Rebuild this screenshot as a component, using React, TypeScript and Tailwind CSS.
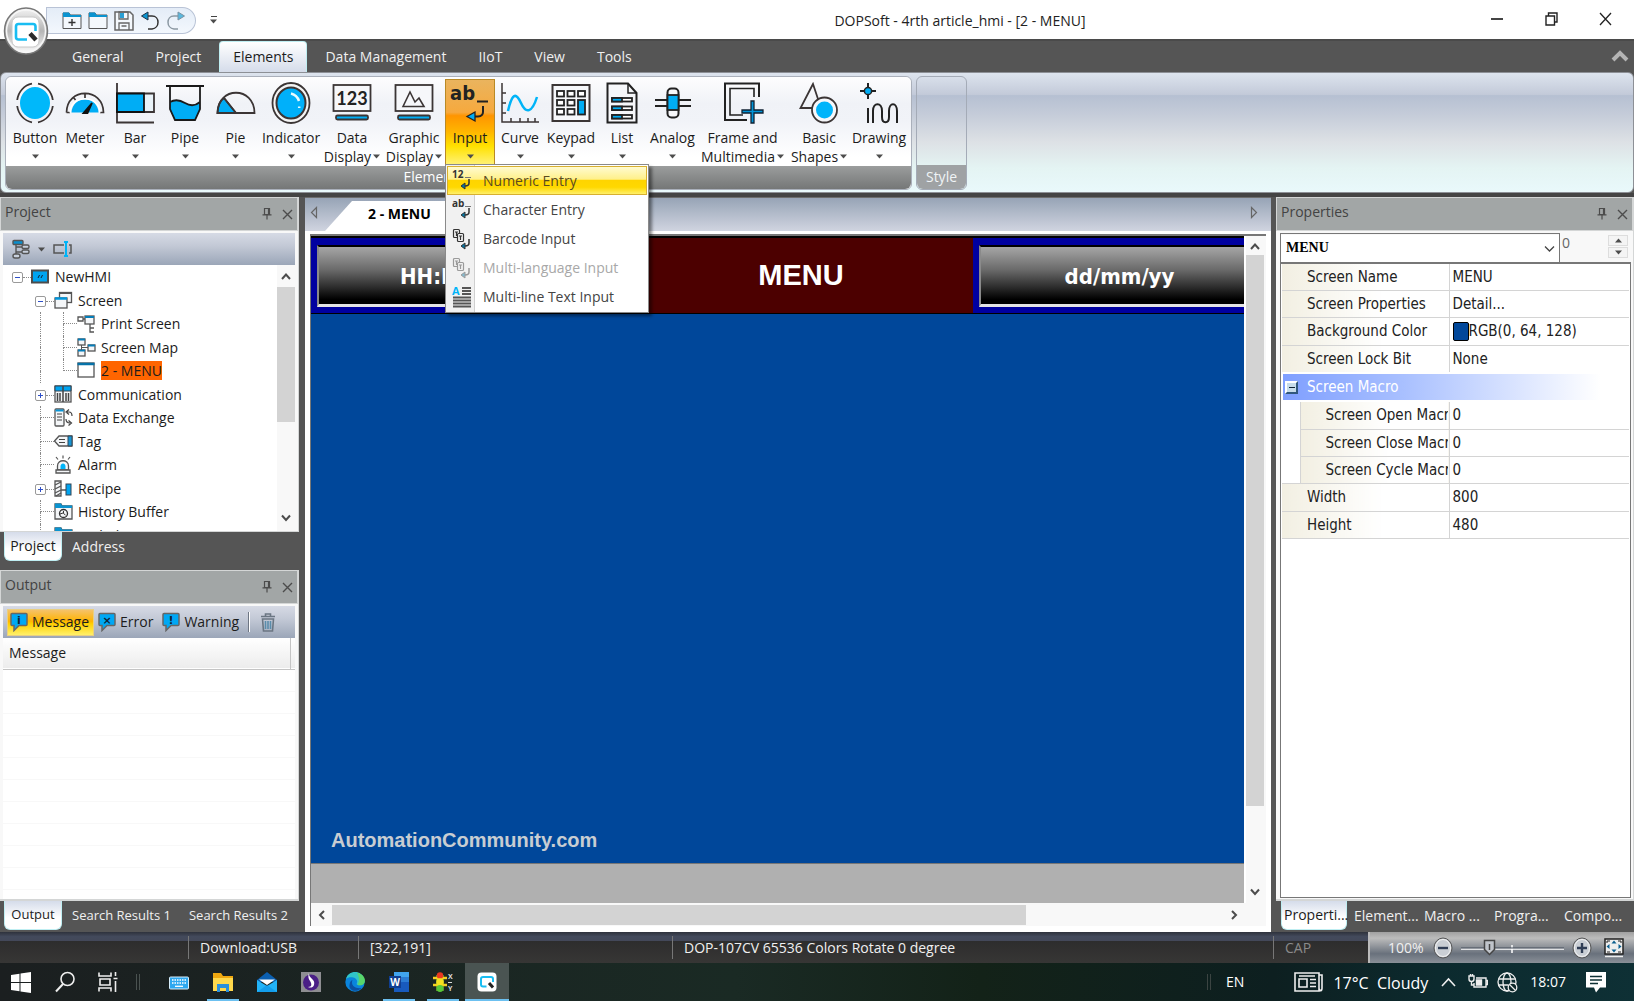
import React from "react";

const INK = "#3b3535";
const SKY = "#00adf5";

/* ---------- shared pieces ---------- */

function Caret({ className = "" }: { className?: string }) {
  return (
    <svg aria-hidden="true" width="7" height="5" viewBox="0 0 7 5" className={className}>
      <path d="M0 0.5h7L3.5 4.5z" fill="#4d4d4d" />
    </svg>
  );
}

function Pin() {
  return (
    <svg aria-hidden="true" width="10" height="14" viewBox="0 0 10 14" fill="none" stroke="#4c4c4c" strokeWidth="1.2">
      <path d="M2.5 1.5h4v6h-4zM6.5 1.5h1v6M0.5 7.8h9M5 8v4.5" />
    </svg>
  );
}

function Cross() {
  return (
    <svg aria-hidden="true" width="11" height="11" viewBox="0 0 11 11" stroke="#4c4c4c" strokeWidth="1.4">
      <path d="M1 1l9 9M10 1l-9 9" />
    </svg>
  );
}

function Chevron({ dir, size = 10 }: { dir: "up" | "down" | "left" | "right"; size?: number }) {
  const d = { up: "M1 8l4-4.5L9 8", down: "M1 2.5L5 7l4-4.5", left: "M7 1L3 5l4 4", right: "M3 1l4 4-4 4" }[dir];
  return (
    <svg aria-hidden="true" width={size} height={size} viewBox="0 0 10 10" fill="none" stroke="#4c4c4c" strokeWidth="2">
      <path d={d} />
    </svg>
  );
}

function PanelHeader({ title }: { title: string }) {
  return (
    <header className="flex h-[34px] shrink-0 items-center justify-between border border-[#d4d6d6] bg-[#a2a6a6] pb-1 pl-1 pr-1 text-sm text-[#434343]">
      <h2>{title}</h2>
      <div className="flex items-center gap-[10px] pt-1">
        <button aria-label={`Pin ${title}`}><Pin /></button>
        <button aria-label={`Close ${title}`}><Cross /></button>
      </div>
    </header>
  );
}

/* ---------- ribbon icons ---------- */

function RibbonIcon({ name }: { name: string }) {
  const art: Record<string, React.ReactNode> = {
    Button: (
      <>
        <ellipse rx="15" ry="16" fill="#00b8fa" stroke="none" />
        <path d="M-3 -19.3A18 19.4 0 0 0 -17.8 -3M-17.8 3A18 19.4 0 0 0 -3 19.3M3 19.3A18 19.4 0 0 0 17.8 3M17.8 -3A18 19.4 0 0 0 3 -19.3" fill="none" strokeWidth="1.8" />
      </>
    ),
    Meter: (
      <>
        <path d="M-13.500 9.500C-13-8 13-8 13.500 9.500z" fill={SKY} stroke="none" />
        <path d="M-18.500 9.500C-18-16 18-16 18.500 9.500h-3.500M-18.500 9.500h3.500M0-10v5M-11.500-5.500l2 2.500" fill="none" strokeWidth="1.700" />
        <path d="M-15 9.500C-14-9 14-9 15 9.500" fill="none" stroke="#fff" strokeWidth="1.500" />
        <path d="M7 0L2.500 10-1.500 10z" fill="#111" stroke="#111" />
      </>
    ),
    Bar: (
      <>
        <path d="M-18-20V19.500H19" fill="none" />
        <path d="M-18-9.500H19V9H-18z" fill="#e9f2f8" />
        <path d="M-18-9.500H9V9H-18z" fill={SKY} stroke="#111" />
      </>
    ),
    Pipe: (
      <>
        <path d="M-15-1Q-8-5 0 0T15-1V6L10 17H-10L-15 6z" fill={SKY} stroke="none" />
        <path d="M-19-17H19M-15-17V6L-10 17H10L15 6V-17M-15-1Q-8-5 0 0T15-1" fill="none" stroke="#1a1a1a" />
      </>
    ),
    Pie: (
      <>
        <path d="M-18.500 10Q-18-1-12-5L0 10z" fill={SKY} />
        <path d="M-18.500 10C-18.500-17 18.500-17 18.500 10zM-12-5L0 10" fill="none" />
      </>
    ),
    Indicator: (
      <>
        <ellipse rx="18.500" ry="20" fill="#f4f4f4" />
        <ellipse rx="14.500" ry="15.500" fill="#00b0fa" strokeWidth="2" />
        <path d="M0-9.500Q6-8 8-2M8.200 3.500v1.500" stroke="#e8fbff" strokeWidth="2.500" fill="none" />
      </>
    ),
    Data: (
      <>
        <rect x="-18.500" y="-18" width="37" height="26" fill="#f6f7fa" />
        <rect x="-16" y="12.500" width="32" height="4" rx="1.500" fill={SKY} />
        <text y="2" textAnchor="middle" fontSize="18" fontWeight="700" fontFamily="Lato, sans-serif" fill="#222" stroke="none">123</text>
      </>
    ),
    Graphic: (
      <>
        <rect x="-18.500" y="-18" width="37" height="26" fill="#f6f7fa" />
        <rect x="-16" y="12.500" width="32" height="4" rx="1.500" fill={SKY} />
        <path d="M-11 3.500L-4-11 1-1 5-5 10 3.500z" fill="none" strokeWidth="1.600" />
      </>
    ),
    Input: (
      <>
        <text x="-20" y="-3" fontSize="20" fontWeight="700" fontFamily="DejaVu Sans Condensed, DejaVu Sans, sans-serif" fill="#222" stroke="none">ab</text>
        <path d="M7-1.500H18M13 3V9Q13 13 8 13.500H4" fill="none" stroke="#222" strokeWidth="2" />
        <path d="M5 9L-3 13.500L5 18z" fill={SKY} stroke="#222" strokeWidth="1.300" />
      </>
    ),
    Curve: (
      <>
        <path d="M-18-20V19H19M-18-10h4M-18 0h4M-18 10h4M-9 19v-4M0 19v-4M8 19v-4M15 19v-4" fill="none" strokeWidth="1.500" />
        <path d="M-12 8C-8-10-4-11 1 0S12 10 17-6" fill="none" stroke="#00b4f8" strokeWidth="2.500" />
      </>
    ),
    Keypad: (
      <>
        <rect x="-18.500" y="-18" width="37" height="36" fill="#f6f7fa" strokeWidth="2" />
        {[-14, -3.5, 7].map((x) =>
          [-12, -3, 6].map((y) =>
            x === 7 && y > -12 ? null : <rect key={`${x}${y}`} x={x} y={y} width="7" height="5.500" fill="#fff" stroke="#222" strokeWidth="1.800" />
          )
        )}
        <rect x="7" y="-3" width="7" height="14.500" fill={SKY} stroke="#222" strokeWidth="1.800" />
      </>
    ),
    List: (
      <>
        <path d="M-14.500-19.500H6L14.500-10V19.500H-14.500z" fill="#f6f7fa" strokeWidth="2" stroke="#222" />
        <path d="M6-19.500V-10H14.500" fill="none" strokeWidth="1.500" stroke="#222" />
        {[-5, 3.5, 12].map((y) => (
          <g key={y} stroke="#222" strokeWidth="1.800">
            <rect x="-10" y={y} width="20" height="3.500" fill="#fff" />
            <rect x="-10" y={y} width="10" height="3.500" fill={SKY} />
          </g>
        ))}
      </>
    ),
    Analog: (
      <>
        <path d="M-18-3H18M-18 3H18" strokeWidth="2" stroke="#222" />
        <rect x="-5.500" y="-14.500" width="11" height="29" rx="4" fill="#f6f7fa" stroke="#222" strokeWidth="2" />
        <rect x="-5.500" y="-8" width="11" height="15" fill={SKY} stroke="#222" />
      </>
    ),
    Frame: (
      <>
        <path d="M16-6V-19.500H-18V17H4" fill="none" stroke="#222" strokeWidth="2" />
        <path d="M11-6V-14.500H-13V12H0" fill="none" stroke="#222" strokeWidth="1.600" />
        <path d="M8-2h3v9h9v3h-9v10h-3v-10h-9v-3h9z" fill="#0094d8" stroke="#123" strokeWidth="1.300" />
      </>
    ),
    Basic: (
      <>
        <path d="M-6-19L-18.500 5H2z" fill="none" />
        <circle cx="5.500" cy="7" r="12.500" fill="#f6f7fa" />
        <circle cx="5.500" cy="7" r="8.500" fill="#00b4fa" stroke="none" />
      </>
    ),
    Drawing: (
      <>
        <path d="M-11-20V-4M-19-12H-3" strokeWidth="2" stroke="#222" />
        <circle cx="-11" cy="-12" r="3.600" fill={SKY} stroke="#222" strokeWidth="1.500" />
        <path d="M-11 20V5M-11 5M-6 20V8C-6-1 3-1 3 8V14C3 21 10 21 10 14V8C10-1 18-1 18 8V20" fill="none" stroke="#222" strokeWidth="2" />
      </>
    ),
  };
  return (
    <svg aria-hidden="true" width="42" height="42" viewBox="-21 -21 42 42" stroke={INK} strokeWidth="1.800" className="shrink-0">
      {art[name]}
    </svg>
  );
}

const RIBBON: { id: string; lines: [string, string?]; w: string }[] = [
  { id: "Button", lines: ["Button"], w: "w-[50px]" },
  { id: "Meter", lines: ["Meter"], w: "w-[50px]" },
  { id: "Bar", lines: ["Bar"], w: "w-[50px]" },
  { id: "Pipe", lines: ["Pipe"], w: "w-[50px]" },
  { id: "Pie", lines: ["Pie"], w: "w-[51px]" },
  { id: "Indicator", lines: ["Indicator"], w: "w-[60px]" },
  { id: "Data", lines: ["Data", "Display"], w: "w-[62px]" },
  { id: "Graphic", lines: ["Graphic", "Display"], w: "w-[62px]" },
  { id: "Input", lines: ["Input"], w: "w-[50px]" },
  { id: "Curve", lines: ["Curve"], w: "w-[50px]" },
  { id: "Keypad", lines: ["Keypad"], w: "w-[52px]" },
  { id: "List", lines: ["List"], w: "w-[50px]" },
  { id: "Analog", lines: ["Analog"], w: "w-[51px]" },
  { id: "Frame", lines: ["Frame and", "Multimedia"], w: "w-[89px]" },
  { id: "Basic", lines: ["Basic", "Shapes"], w: "w-[64px]" },
  { id: "Drawing", lines: ["Drawing"], w: "w-[56px]" },
];

/* ---------- input drop-down ---------- */

function MenuArrow({ faded = false }: { faded?: boolean }) {
  return (
    <g opacity={faded ? 0.45 : 1}>
      <path d="M17 11v4q0 3-4 3" fill="none" stroke="#333" strokeWidth="1.500" />
      <path d="M13 15l-4 3 4 3z" fill="#0078a8" stroke="#333" />
    </g>
  );
}

function MenuIcon({ kind }: { kind: string }) {
  if (kind === "lines")
    return (
      <svg aria-hidden="true" width="20" height="22" viewBox="0 0 20 22">
        <path d="M10 2h9M10 5h9M10 8h9M1 11.500h18M1 14.500h18M1 17.500h18M1 20.500h18" stroke="#555" strokeWidth="1.900" />
        <text x="0" y="9" fontSize="11" fontWeight="700" fontFamily="Open Sans, sans-serif" fill="#00b4f8">A</text>
      </svg>
    );
  if (kind === "barcode" || kind === "lang")
    return (
      <svg aria-hidden="true" width="20" height="22" viewBox="0 0 20 22">
        <g opacity={kind === "lang" ? 0.45 : 1} fill="none" stroke="#333" strokeWidth="1.200">
          <rect x="1.500" y="1.500" width="6" height="8" rx="1" />
          <path d="M3 4h3M4.500 4v4" />
          <rect x="5.500" y="5.500" width="6" height="8" rx="1" fill="#f2f2f2" />
          <path d="M7 8h3M8.500 8v4" />
        </g>
        <MenuArrow faded={kind === "lang"} />
      </svg>
    );
  return (
    <svg aria-hidden="true" width="20" height="22" viewBox="0 0 20 22">
      <text x="0" y="8" fontSize="10" fontWeight="700" fontFamily="Open Sans, sans-serif" fill="#333">{kind}</text>
      <path d="M13 7.500h6" stroke="#777" />
      <g transform="translate(0 -2)"><MenuArrow /></g>
    </svg>
  );
}

const MENU = [
  { label: "Numeric Entry", kind: "12" },
  { label: "Character Entry", kind: "ab" },
  { label: "Barcode Input", kind: "barcode" },
  { label: "Multi-language Input", kind: "lang" },
  { label: "Multi-line Text Input", kind: "lines" },
];

function InputMenu() {
  return (
    <div role="menu" className="absolute left-0 top-[85px] z-20 flex w-[204px] flex-col border border-[#8a8a8a] bg-[linear-gradient(90deg,#f1f1f1_28px,#d0d0d0_28px,#d0d0d0_29px,#fff_29px)] p-px text-left shadow-[3px_3px_3px_rgba(0,0,0,0.45)]">
      {MENU.map((m, i) => (
        <button
          key={m.label}
          role="menuitem"
          disabled={m.kind === "lang"}
          className={`flex h-[29px] items-center gap-[11px] whitespace-nowrap border pl-1 text-sm disabled:text-[#a8a8a8] ${
            i === 0
              ? "border-[#d8b030] bg-[linear-gradient(180deg,#fffbd0_0%,#fff08a_45%,#ffd400_50%,#ffd800_75%,#fff06a_100%)] text-[#5a4a20]"
              : "border-transparent text-[#444]"
          }`}
        >
          <MenuIcon kind={m.kind} />
          {m.label}
        </button>
      ))}
    </div>
  );
}

function Ribbon() {
  return (
    <section className="flex h-[121px] shrink-0 items-start rounded-md border border-[#8d9096] bg-[linear-gradient(180deg,#dde4ee_0%,#c3cad9_18%,#b6c0d2_19%,#c5ccd9_35%,#dde1e5_58%,#e4f4f3_80%,#e9f9fb_100%)] px-1 pt-[3px]">
      <div className="rounded-md border border-[#aab0bb] bg-[#fdfdfe]">
        <div className="flex h-[89px] rounded-t-md bg-[linear-gradient(180deg,#fdfdfe_0%,#f0f2f7_30%,#f1f3f8_50%,#ffffff_90%)] px-1 pt-[2px]">
          {RIBBON.map((r) => {
            const active = r.id === "Input";
            return (
              <div key={r.id} className={`relative shrink-0 ${r.w}`}>
                <button
                  className={`flex h-[87px] w-full flex-col items-center whitespace-nowrap border pt-[2px] text-sm leading-[19px] text-[#1c1c1c] ${
                    active
                      ? "border-[#b98a26] bg-[linear-gradient(180deg,#eab45e_0%,#f6a93e_38%,#ff9500_42%,#ffb400_60%,#ffe100_78%,#fff27a_100%)]"
                      : "border-transparent"
                  }`}
                >
                  <RibbonIcon name={r.id} />
                  <span className="mt-1">{r.lines[0]}</span>
                  {r.lines[1] ? (
                    <span className="flex items-center gap-[2px] leading-[19px]">
                      {r.lines[1]}
                      <Caret />
                    </span>
                  ) : (
                    <Caret className="mt-[7px]" />
                  )}
                </button>
                {active && <InputMenu />}
              </div>
            );
          })}
        </div>
        <div className="h-[23px] rounded-b-md bg-[linear-gradient(180deg,#9b9d9d,#757777)] text-center text-sm leading-[22px] text-white">
          <span className="pr-[50px]">Elements</span>
        </div>
      </div>
      <div className="ml-1 flex h-[114px] w-[51px] flex-col justify-end rounded-md border border-[#a4abb7]">
        <div className="h-6 rounded-b-md bg-[#9fa2a4] text-center text-sm leading-[23px] text-[#f0f4f6]">Style</div>
      </div>
    </section>
  );
}

/* ---------- title bar and tabs ---------- */

function AppBadge() {
  return (
    <svg aria-hidden="true" width="46" height="50" viewBox="0 0 46 50">
      <defs>
        <linearGradient id="badge" x1="0" y1="0" x2="0" y2="1">
          <stop offset="0" stopColor="#f4f4f4" />
          <stop offset="0.5" stopColor="#b5b5b5" />
          <stop offset="1" stopColor="#fff" />
        </linearGradient>
      </defs>
      <ellipse cx="23" cy="25" rx="21.500" ry="23" fill="url(#badge)" stroke="#777" strokeWidth="1.500" />
      <ellipse cx="23" cy="25" rx="19.500" ry="21" fill="none" stroke="#f6f6f6" strokeWidth="1.500" />
      <rect x="9" y="11" width="27" height="30" rx="6" fill="#fff" stroke="#c8c8c8" />
      <path d="M24 33.500H15.500q-2.500 0-2.500-2.500V20.500Q13 18 15.500 18H30q2.500 0 2.500 2.500V25" fill="none" stroke="#19bdf2" strokeWidth="2.600" />
      <path d="M27 27.500L33 34" stroke="#2b2b2b" strokeWidth="4.500" />
    </svg>
  );
}

function QuickIcon({ name }: { name: string }) {
  const d: Record<string, React.ReactNode> = {
    New: (<><path d="M1 2h6l1.500 2H19v13.500H1z" fill="#f4f8fc" stroke="#555" /><path d="M1 1.500h6l1.500 2.500H19v2H1z" fill="#0a93d0" /><path d="M10 8v7M6.500 11.500h7" stroke="#333" strokeWidth="1.400" /></>),
    Open: (<><path d="M1 2h6l1.500 2H19v13.500H1z" fill="#f4f8fc" stroke="#555" /><path d="M1 1.500h6l1.500 2.500H19v2H1z" fill="#0a93d0" /></>),
    Save: (<><path d="M1 1h15l3 3v15H1z" fill="#f4f8fc" stroke="#666" strokeWidth="1.500" /><path d="M5 1h9v7H5zM5 19v-7h10v7M7.500 15h5" fill="none" stroke="#666" strokeWidth="1.300" /><path d="M6 2h4v5H6z" fill="#2a9fd4" /></>),
    Undo: (<><path d="M5 5h7c8 0 8 12 0 13H8" fill="none" stroke="#333" strokeWidth="1.500" /><path d="M8 1L1.500 5 8 9z" fill="#0a93d0" stroke="#234" /></>),
    Redo: (<><path d="M15 5H8c-8 0-8 12 0 13h4" fill="none" stroke="#8c99a3" strokeWidth="1.500" /><path d="M12 1l6.500 4L12 9z" fill="#5ab8de" stroke="#7a93a3" /></>),
  };
  return <svg aria-hidden="true" width="20" height="20" viewBox="0 0 20 20">{d[name]}</svg>;
}

function TitleBar() {
  return (
    <header className="flex h-[39px] shrink-0 bg-white">
      <div className="flex w-[450px] shrink-0 items-start gap-[14px] pl-[46px] pt-[7px]">
        <div className="flex h-[27px] items-center gap-[6px] rounded-l-[12px] rounded-r-full border border-[#b9c3d6] bg-[linear-gradient(180deg,#e4ecf7,#f3f8fd)] pl-[15px] pr-[9px]">
          {["New", "Open", "Save", "Undo", "Redo"].map((n) => (
            <button key={n} aria-label={n}><QuickIcon name={n} /></button>
          ))}
        </div>
        <button aria-label="Customize toolbar" className="mt-[9px] flex flex-col items-center gap-[2px]">
          <span className="h-px w-[6px] bg-[#444]" />
          <Caret />
        </button>
      </div>
      <h1 className="flex flex-1 items-center justify-center whitespace-nowrap pt-[2px] text-sm text-[#222]">DOPSoft - 4rth article_hmi - [2 - MENU]</h1>
      <div className="flex w-[164px] shrink-0 items-center pb-[2px] pr-[2px] text-[#222]">
        <button aria-label="Minimize" className="flex flex-1 justify-center"><span className="h-[2px] w-3 bg-[#444]" /></button>
        <button aria-label="Restore" className="flex flex-1 justify-center">
          <svg aria-hidden="true" width="13" height="14" viewBox="0 0 13 14" fill="none" stroke="#222" strokeWidth="1.400"><path d="M1 4h8.500v9H1zM3.500 4V1H12v9H9.500" /></svg>
        </button>
        <button aria-label="Close" className="flex flex-1 justify-center">
          <svg aria-hidden="true" width="13" height="14" viewBox="0 0 13 14" stroke="#222" strokeWidth="1.300"><path d="M1 1l11 12M12 1L1 13" /></svg>
        </button>
      </div>
    </header>
  );
}

function RibbonTabs() {
  return (
    <nav className="flex h-[33px] shrink-0 items-end border-t-2 border-[#4a4a4a] bg-[#555] pl-14 pr-1 text-sm">
      {["General", "Project", "Elements", "Data Management", "IIoT", "View", "Tools"].map((t) => (
        <button
          key={t}
          className={
            t === "Elements"
              ? "mx-[2px] h-[31px] rounded-t-[4px] border-x border-t border-[#bfeef2] bg-[linear-gradient(180deg,#ffffff,#d5dcea)] px-[13px] text-[#1c1c1c]"
              : "h-[31px] px-4 text-[#f0f0f0]"
          }
        >
          {t}
        </button>
      ))}
      <button aria-label="Collapse ribbon" className="ml-auto self-center pb-px">
        <svg aria-hidden="true" width="20" height="16" viewBox="0 0 20 16" fill="none" stroke="#b4b4b4" strokeWidth="4"><path d="M3 12l7-7 7 7" /></svg>
      </button>
    </nav>
  );
}

/* ---------- project tree ---------- */

function TreeIcon({ name }: { name: string }) {
  const s = { fill: "#f4f6f8", stroke: "#555", strokeWidth: 1.3 };
  const art: Record<string, React.ReactNode> = {
    hmi: (<><rect x="1" y="3.500" width="16" height="12" fill="#00a4f0" stroke="#4c4c4c" strokeWidth="2" /><path d="M7 11l1.500-3M10 11l1.500-3" stroke="#123" /></>),
    screens: (<><rect x="5.500" y="1.500" width="12" height="10" {...s} /><path d="M5 2h13" stroke="#555" strokeWidth="2" /><rect x="1" y="7" width="12" height="10" {...s} /><path d="M1 7.500h12" stroke="#0096dc" strokeWidth="2.500" /></>),
    print: (<><rect x="8" y="2" width="9" height="8" {...s} /><path d="M8 3h9" stroke="#067db8" strokeWidth="2" /><path d="M1 3h5v4H1zM6 5h2M13 10v8h4M13 14h4" fill="none" stroke="#555" strokeWidth="1.300" /></>),
    map: (<><rect x="1" y="1" width="7" height="6" {...s} /><rect x="1" y="12" width="7" height="6" {...s} /><rect x="11" y="7" width="7" height="6" {...s} /><path d="M1 1.500h7M1 12.500h7M11 7.500h7" stroke="#067db8" strokeWidth="2" /><path d="M4.500 7v5M4.500 9.500H11" stroke="#555" /></>),
    window: (<><rect x="1" y="2" width="16" height="14" {...s} fill="#fff" /><path d="M0.500 3h17" stroke="#0672a8" strokeWidth="2.500" /></>),
    comm: (<><rect x="1" y="1" width="16" height="16" {...s} /><path d="M1 1h16v5H1z" fill="#00a4f0" stroke="#345" /><path d="M9 1v16M3.500 8v8M6 8v8M12 8v8M14.500 8v8" stroke="#444" strokeWidth="1.500" /></>),
    exchange: (<><rect x="1" y="1" width="9" height="17" rx="1" {...s} /><path d="M1.500 2.500h8" stroke="#0896d8" strokeWidth="2" /><path d="M3 6h5M3 9h5M3 12h5M13 4h2q3 0 3 4M15 1.500L12 4l3 2.500M12 11q0 4 4 4M14.500 12.500L17.500 15l-3 2.500" fill="none" stroke="#444" strokeWidth="1.200" /></>),
    tag: (<><path d="M5 4h13v10H5L0.500 9z" {...s} /><path d="M14 4h4v10h-4z" fill="#1795d4" stroke="#345" /><path d="M5 7.500h6M5 10.500h6" stroke="#444" /></>),
    alarm: (<><path d="M3.500 15V11c0-7 11-7 11 0v4z" {...s} /><path d="M6.500 14v-2.500c0-4 5-4 5 0V14z" fill="#00b4f8" /><path d="M2 15h14v3H2z" {...s} /><path d="M9 0.500v3M2 2l2 2.500M16 2l-2 2.500" stroke="#555" strokeWidth="1.200" /></>),
    recipe: (<><path d="M1 2h6v15H1z" {...s} /><path d="M1 6l6-3M1 10l6-3M1 14l6-3M2 17l5-3M7 11h5" stroke="#555" strokeWidth="1.300" /><rect x="12" y="5" width="5" height="11" fill="#00a4f0" stroke="#345" /></>),
    history: (<><path d="M1 2h6l1 2h10v13H1z" {...s} /><path d="M1 1.500h6l1 2h10v2.500H1z" fill="#0a93d0" /><circle cx="9.500" cy="11.500" r="4" {...s} stroke="#333" /><path d="M9.500 9v2.500l2 1.500M6 12l3-1" stroke="#333" fill="none" /></>),
  };
  return <svg aria-hidden="true" width="19" height="19" viewBox="0 0 19 19" className="shrink-0">{art[name]}</svg>;
}

type Node = { label: string; icon: string; depth: 0 | 1 | 2; toggle?: "+" | "-"; selected?: boolean };
const TREE: Node[] = [
  { label: "NewHMI", icon: "hmi", depth: 0, toggle: "-" },
  { label: "Screen", icon: "screens", depth: 1, toggle: "-" },
  { label: "Print Screen", icon: "print", depth: 2 },
  { label: "Screen Map", icon: "map", depth: 2 },
  { label: "2 - MENU", icon: "window", depth: 2, selected: true },
  { label: "Communication", icon: "comm", depth: 1, toggle: "+" },
  { label: "Data Exchange", icon: "exchange", depth: 1 },
  { label: "Tag", icon: "tag", depth: 1 },
  { label: "Alarm", icon: "alarm", depth: 1 },
  { label: "Recipe", icon: "recipe", depth: 1, toggle: "+" },
  { label: "History Buffer", icon: "history", depth: 1 },
  { label: "Multi-language", icon: "history", depth: 1 },
];
const CELL = "w-[23px] shrink-0 self-stretch";

function Rail({ kind }: { kind: "blank" | "line" | "tee" | "end" }) {
  if (kind === "blank") return <span className={CELL} />;
  return (
    <span className={`${CELL} flex flex-col pl-[9px]`}>
      <span className="flex-1 border-b border-l border-dotted border-[#8a8a8a] data-[k=line]:border-b-0" data-k={kind} />
      <span className={kind === "end" ? "flex-1" : "flex-1 border-l border-dotted border-[#8a8a8a]"} />
    </span>
  );
}

function Toggle({ sign }: { sign: string }) {
  return (
    <span className={`${CELL} flex items-center pl-1 pt-[2px]`}>
      <button aria-label={sign === "+" ? "Expand" : "Collapse"} className="relative h-[11px] w-[11px] shrink-0 rounded-[2px] border border-[#9a9a9a] bg-white">
        <span className="absolute left-[2px] top-1 h-px w-[5px] bg-[#2f50c8]" />
        {sign === "+" && <span className="absolute left-1 top-[2px] h-[5px] w-px bg-[#2f50c8]" />}
      </button>
      <span className="flex-1 border-t border-dotted border-[#8a8a8a]" />
    </span>
  );
}

function ProjectTree() {
  return (
    <div className="flex min-h-0 flex-1 bg-white">
      <div className="min-w-0 flex-1 overflow-hidden">
        <ul className="flex h-[282px] flex-col pl-[5px] text-sm text-[#1c1c1c]">
          {TREE.map((n, i) => (
            <li key={n.label} className="flex min-h-0 flex-1 items-center whitespace-nowrap">
              {n.depth > 0 && <Rail kind="blank" />}
              {n.depth === 2 && <Rail kind="line" />}
              {n.toggle ? <Toggle sign={n.toggle} /> : <Rail kind={n.depth === 2 && i === 4 ? "end" : "tee"} />}
              <TreeIcon name={n.icon} />
              <span className={n.selected ? "ml-[5px] bg-[#ff6500] leading-[19px]" : "ml-[5px] leading-[19px]"}>{n.label}</span>
            </li>
          ))}
        </ul>
      </div>
      <div className="flex w-[18px] shrink-0 flex-col items-center bg-[#f8f8f8]">
        <span className="flex h-[22px] items-center"><Chevron dir="up" /></span>
        <span className="h-[135px] w-full bg-[#d3d3d3]" />
        <span className="mt-auto flex h-[26px] items-center"><Chevron dir="down" /></span>
      </div>
    </div>
  );
}

function BottomTabs({ tabs, className }: { tabs: string[]; className: string }) {
  return (
    <div className={`flex shrink-0 items-start whitespace-nowrap bg-[#555] pl-1 ${className}`}>
      {tabs.map((t, i) => (
        <button
          key={t}
          className={
            i === 0
              ? "h-[29px] w-[58px] rounded-b-md border-x border-b border-[#bfeef2] bg-[linear-gradient(180deg,#d5dcea,#ffffff_60%)] text-[#1c1c1c]"
              : "ml-[2px] h-[29px] px-2 text-[#f0f0f0]"
          }
        >
          {t}
        </button>
      ))}
    </div>
  );
}

const TOOLBAR = "flex shrink-0 items-center bg-[linear-gradient(180deg,#d6dae5_0%,#c3c9d6_40%,#9ba6b8_100%)]";

function ProjectPanel() {
  return (
    <>
      <section className="flex h-[335px] shrink-0 flex-col border-b border-r border-[#d4d6d6] bg-[#f8f8f8]">
        <PanelHeader title="Project" />
        <div className="flex min-h-0 flex-1 flex-col px-[3px] pt-[2px]">
          <div className={`${TOOLBAR} h-8 gap-2 pl-2`}>
            <button aria-label="Tree view" className="flex items-center gap-[7px]">
              <svg aria-hidden="true" width="20" height="20" viewBox="0 0 20 20" fill="#c8d0dc" stroke="#555" strokeWidth="1.400">
                <path d="M5 5v11h3M5 8h6M5 13h6" fill="none" />
                <rect x="2" y="1.500" width="10" height="4" rx="1" fill="#0a8ecc" />
                <rect x="11" y="6" width="7" height="3.500" rx="1.500" /><rect x="11" y="11" width="7" height="3.500" rx="1.500" /><rect x="2" y="15" width="7" height="4" rx="2" />
              </svg>
              <Caret />
            </button>
            <button aria-label="Rename">
              <svg aria-hidden="true" width="20" height="16" viewBox="0 0 20 16" fill="none" stroke="#555" strokeWidth="1.500">
                <path d="M11 4H1v8h10M16 4h2v8h-2" /><path d="M11 1h4M13 1v14M11 15h4" stroke="#00b4f8" strokeWidth="2" />
              </svg>
            </button>
          </div>
          <ProjectTree />
        </div>
      </section>
      <BottomTabs tabs={["Project", "Address"]} className="h-[38px] text-sm" />
    </>
  );
}

function Bubble({ glyph }: { glyph: string }) {
  return (
    <svg aria-hidden="true" width="18" height="20" viewBox="0 0 18 20">
      <path d="M2 1.500h14q1 0 1 1v10q0 1-1 1H9l-5 5v-5H2q-1 0-1-1v-10q0-1 1-1z" fill="#00a8f4" stroke="#666" strokeWidth="1.500" />
      <text x="9" y="11.500" textAnchor="middle" fontSize="11" fontWeight="700" fontFamily="DejaVu Sans, sans-serif" fill="#123">{glyph}</text>
    </svg>
  );
}

function OutputPanel() {
  return (
    <>
      <section className="flex min-h-0 flex-1 flex-col border-b-2 border-r border-[#d4d6d6] bg-[#f8f8f8]">
        <PanelHeader title="Output" />
        <div className="flex min-h-0 flex-1 flex-col px-[3px] pt-[2px]">
          <div className={`${TOOLBAR} h-8 whitespace-nowrap pl-1 text-sm text-[#1c1c1c]`}>
            <button className="flex h-[27px] w-[87px] items-center gap-1 border border-[#e9cf80] bg-[linear-gradient(180deg,#f5c26a_0%,#ffb400_45%,#ffcf00_55%,#fff06a_100%)] pl-[2px]"><Bubble glyph="i" />Message</button>
            <button className="ml-1 flex items-center gap-1"><Bubble glyph="×" />Error</button>
            <button className="ml-[9px] flex items-center gap-1"><Bubble glyph="!" />Warning</button>
            <span className="ml-[9px] h-5 w-[2px] border-l border-[#6e7683] bg-white" />
            <button aria-label="Clear" className="ml-[10px]">
              <svg aria-hidden="true" width="16" height="19" viewBox="0 0 16 19" fill="none" stroke="#6b7683" strokeWidth="1.600">
                <path d="M5.500 3V1h5v2M1 3.500h14M2.500 6l1 12h9l1-12z" /><path d="M5.500 8v8M8 8v8M10.500 8v8" stroke="#5a8cab" />
              </svg>
            </button>
          </div>
          <table className="w-full text-left text-sm text-[#1c1c1c]">
            <thead>
              <tr className="h-[31px] border-b border-[#c4c4c4] bg-[linear-gradient(180deg,#ffffff,#ececec)]">
                <th className="border-r border-[#c4c4c4] pl-[6px] font-normal">Message</th>
                <th aria-label="Spacer" className="w-[5px]" />
              </tr>
            </thead>
          </table>
          <div className="flex-1 bg-[repeating-linear-gradient(180deg,#fff_0,#fff_21px,#f8f8f8_21px,#f8f8f8_22px)]" />
        </div>
      </section>
      <BottomTabs tabs={["Output", "Search Results 1", "Search Results 2"]} className="h-[31px] text-[13px]" />
    </>
  );
}

/* ---------- canvas ---------- */

function Gauge({ text, className }: { text: string; className: string }) {
  return (
    <div className={`flex h-[62px] shrink-0 items-center justify-center border-b-[3px] border-l-2 border-r-2 border-t-2 border-b-[#e4e4e4] border-l-[#8a8a8a] border-r-[#8a8a8a] border-t-black bg-[linear-gradient(180deg,#a6a6a6_0%,#6a6a6a_40%,#000_92%)] pt-[2px] font-['DejaVu_Sans_Condensed','DejaVu_Sans',sans-serif] text-[22px] font-bold text-white ${className}`}>
      {text}
    </div>
  );
}

function Canvas() {
  return (
    <section className="flex min-w-0 flex-1 flex-col bg-white">
      <div className="flex h-[34px] shrink-0 items-stretch justify-between border-t border-[#6c6c6c] bg-[linear-gradient(180deg,#97a4b6,#d0d4e0)]">
        <div className="flex">
          <button aria-label="Previous tab" className="w-5 pb-1 pl-[5px]">
            <svg aria-hidden="true" width="8" height="13" viewBox="0 0 8 13" fill="none" stroke="#666" strokeWidth="1.200"><path d="M6.500 1.500v10l-5-5z" /></svg>
          </button>
          <button className="mt-[3px] w-[200px] bg-white pb-1 pl-[43px] text-left text-sm font-bold text-black [clip-path:polygon(27px_0,100%_0,100%_100%,0_100%)]">2 - MENU</button>
        </div>
        <button aria-label="Next tab" className="w-6 pb-1 pl-[3px]">
          <svg aria-hidden="true" width="8" height="13" viewBox="0 0 8 13" fill="none" stroke="#666" strokeWidth="1.200"><path d="M1.500 1.500v10l5-5z" /></svg>
        </button>
      </div>
      <div className="mx-[5px] mb-[6px] mt-[3px] flex min-h-0 flex-1 flex-col border-l border-t-2 border-[#777] bg-[#f8f8f8]">
        <div className="flex min-h-0 flex-1">
          <div className="flex min-w-0 flex-1 flex-col overflow-hidden bg-[#b0b0b0]">
            <div className="flex min-h-0 flex-1 flex-col border-b border-[#777] bg-[#00479a]">
              <div className="flex h-[78px] shrink-0 border-b border-t-2 border-black bg-[#0000a0] pl-[6px]">
                <Gauge text="HH:MM:SS" className="mt-[7px] w-[282px]" />
                <div className="ml-[22px] flex min-w-0 flex-1 items-center justify-center bg-[#4c0000] pl-2 font-['Liberation_Sans',Arial,sans-serif] text-[29px] font-bold text-white">MENU</div>
                <div className="flex w-[271px] shrink-0 pl-[6px]">
                  <Gauge text="dd/mm/yy" className="mt-[7px] w-[281px]" />
                </div>
              </div>
              <p className="mt-auto pb-[9px] pl-5 font-['Liberation_Sans',Arial,sans-serif] text-xl font-bold text-[#c8cdd2]">AutomationCommunity.com</p>
            </div>
            <div className="h-[39px] shrink-0" />
          </div>
          <div className="flex w-[22px] shrink-0 flex-col items-start border-l-2 border-white">
            <span className="flex h-[19px] w-[18px] items-center justify-center"><Chevron dir="up" /></span>
            <span className="h-[551px] w-[18px] bg-[#d3d3d3]" />
            <span className="mt-auto flex h-[22px] w-[18px] items-center justify-center"><Chevron dir="down" /></span>
          </div>
        </div>
        <div className="flex h-[23px] shrink-0 items-center">
          <span className="flex w-[21px] justify-center"><Chevron dir="left" /></span>
          <span className="h-[20px] w-[694px] bg-[#d3d3d3]" />
          <span className="ml-auto mr-[27px]"><Chevron dir="right" /></span>
        </div>
      </div>
    </section>
  );
}

/* ---------- properties ---------- */

const NAME = "border-r border-[#d4d4d4] bg-[linear-gradient(90deg,#f2efe2,#ffffff_60%)] whitespace-nowrap overflow-hidden font-normal";

function PropertyTable() {
  const top: [string, React.ReactNode][] = [
    ["Screen Name", "MENU"],
    ["Screen Properties", "Detail..."],
    ["Background Color", <span key="c" className="flex items-center"><span className="h-[19px] w-4 rounded-[2px] border border-black bg-[#00479a]" />RGB(0, 64, 128)</span>],
    ["Screen Lock Bit", "None"],
  ];
  return (
    <table className="h-[275px] w-full table-fixed text-left font-['DejaVu_Sans_Condensed','DejaVu_Sans',sans-serif] text-[15px] text-[#222]">
      <colgroup><col className="w-[18px]" /><col className="w-[149px]" /><col /></colgroup>
      <tbody>
        {top.map(([k, v]) => (
          <tr key={k} className="border-b border-[#d4d4d4]">
            <th colSpan={2} className={`${NAME} pl-[25px]`}>{k}</th>
            <td className="whitespace-nowrap pl-[3px]">{v}</td>
          </tr>
        ))}
        <tr className="border-b border-[#d4d4d4]">
          <th colSpan={3} className="border-2 border-white bg-[linear-gradient(90deg,#7f9fff,#a9c0ff_35%,#ffffff_92%)] p-0 font-normal text-white">
            <span className="flex items-center gap-[9px] pl-[2px]">
              <button aria-label="Collapse Screen Macro" className="flex h-[13px] w-[13px] items-center justify-center border-2 border-[#31587e] border-l-white border-t-white bg-[#c7dcea]"><span className="h-px w-[6px] bg-[#123]" /></button>
              Screen Macro
            </span>
          </th>
        </tr>
        {["Screen Open Macro", "Screen Close Macro", "Screen Cycle Macro"].map((k) => (
          <tr key={k}>
            <td className="border-r border-[#d4d4d4]" />
            <th className={`${NAME} border-b pl-[25px]`}><span className="block w-[122px] overflow-hidden">{k}</span></th>
            <td className="border-b border-[#d4d4d4] pl-[3px]">0</td>
          </tr>
        ))}
        {[["Width", "800"], ["Height", "480"]].map(([k, v]) => (
          <tr key={k} className="border-y border-[#d4d4d4]">
            <th colSpan={2} className={`${NAME} pl-[25px]`}>{k}</th>
            <td className="pl-[3px]">{v}</td>
          </tr>
        ))}
      </tbody>
    </table>
  );
}

function PropertiesPanel() {
  return (
    <aside className="flex w-[358px] shrink-0 flex-col">
      <section className="flex min-h-0 flex-1 flex-col border-b-2 border-r border-[#d4d6d6] bg-[#f8f8f8]">
        <PanelHeader title="Properties" />
        <div className="flex min-h-0 flex-1 flex-col pb-px pl-1 pr-[2px] pt-[2px]">
          <div className="flex h-[29px] shrink-0">
            <div className="relative flex-1 border border-[#777]">
              <select aria-label="Selected element" className="h-full w-full appearance-none bg-white pl-[5px] font-['Liberation_Serif',serif] text-sm font-bold text-black">
                <option>MENU</option>
              </select>
              <svg aria-hidden="true" width="11" height="8" viewBox="0 0 11 8" fill="none" stroke="#444" strokeWidth="1.300" className="absolute right-1 top-[11px]"><path d="M1 1.500l4.500 4.500L10 1.500" /></svg>
            </div>
            <div className="flex w-[71px] items-start justify-between pl-[2px] pr-[3px]">
              <input aria-label="Index" defaultValue="0" disabled className="h-5 w-8 bg-transparent text-sm text-[#666]" />
              <div className="mt-[2px] flex flex-col gap-px">
                <button aria-label="Increase" className="flex h-[11px] w-5 items-center justify-center border border-[#ddd] bg-[#f4f4f4]"><svg aria-hidden="true" width="7" height="5" viewBox="0 0 7 5"><path d="M0 4.500h7L3.500 0.500z" fill="#4d4d4d" /></svg></button>
                <button aria-label="Decrease" className="flex h-[11px] w-5 items-center justify-center border border-[#ddd] bg-[#f4f4f4]"><Caret /></button>
              </div>
            </div>
          </div>
          <div className="min-h-0 flex-1 border-x border-b border-t-2 border-[#777] bg-white"><PropertyTable /></div>
        </div>
      </section>
      <div className="flex h-[31px] shrink-0 items-start whitespace-nowrap bg-[#555] pl-[5px] text-sm">
        {["Properti...", "Element...", "Macro ...", "Progra...", "Compo..."].map((t, i) => (
          <button
            key={t}
            className={
              i === 0
                ? "mr-[6px] h-[29px] w-[66px] rounded-b-md border-x border-b border-[#bfeef2] bg-[linear-gradient(180deg,#d5dcea,#ffffff_60%)] pl-[2px] text-left text-[#1c1c1c]"
                : "h-[29px] w-[70px] pl-px text-left text-[#f0f0f0]"
            }
          >
            {t}
          </button>
        ))}
      </div>
    </aside>
  );
}

/* ---------- status bar ---------- */

function ZoomButton({ plus }: { plus?: boolean }) {
  return (
    <svg aria-hidden="true" width="20" height="22" viewBox="0 0 20 22">
      <ellipse cx="10" cy="11" rx="9" ry="10" fill="#c9ced4" stroke="#555" />
      <ellipse cx="10" cy="11" rx="7.500" ry="8.500" fill="none" stroke="#f2f2f2" />
      <path d={plus ? "M5 11h10M10 6v10" : "M5 11h10"} stroke="#2f3d55" strokeWidth="2.400" />
    </svg>
  );
}

function StatusBar() {
  const sep = "flex items-center border-l border-[#777] my-1 pl-[11px]";
  return (
    <footer className="flex h-[31px] shrink-0 bg-[linear-gradient(180deg,#2e323c_0%,#434a5c_15%,#434859_28%,#2d2d2d_30%,#373635_100%)] text-sm text-[#f0f0f0]">
      <div className="w-[188px]" />
      <div className={`${sep} w-[170px]`}>Download:USB</div>
      <div className={`${sep} w-[314px]`}>[322,191]</div>
      <div className={`${sep} flex-1`}>DOP-107CV 65536 Colors Rotate 0 degree</div>
      <div className={`${sep} w-[95px] text-[#8a8a8a]`}>CAP</div>
      <div className="flex w-[266px] items-center border-l-2 border-[#bbb] bg-[linear-gradient(180deg,#a0a0a0_0%,#bcbcbc_20%,#8a8f96_50%,#69717c_70%,#8a9098_100%)] pl-[18px]">
        <span className="w-[45px]">100%</span>
        <button aria-label="Zoom out"><ZoomButton /></button>
        <label className="relative mx-2 flex h-[24px] w-[103px] items-center">
          <input type="range" aria-label="Zoom" defaultValue={28} className="absolute inset-0 h-full w-full cursor-pointer opacity-0" />
          <svg aria-hidden="true" width="103" height="18" viewBox="0 0 103 18" fill="none">
            <path d="M0 10h103M51 6v8" stroke="#fff" strokeWidth="1.500" />
            <path d="M0 9h103" stroke="#444c5a" strokeWidth="1" />
            <path d="M23.500 1.500h10v9l-5 5-5-5z" fill="#c0c4ca" stroke="#444" strokeWidth="1.500" />
            <path d="M28.500 5v6" stroke="#444" strokeWidth="1.500" />
          </svg>
        </label>
        <button aria-label="Zoom in"><ZoomButton plus /></button>
        <button aria-label="Fit to window" className="ml-3">
          <svg aria-hidden="true" width="20" height="20" viewBox="0 0 20 20">
            <rect x="1" y="1" width="18" height="15" fill="#eee" stroke="#222" strokeWidth="1.500" />
            <path d="M10 2.500l2.500 3h-5zM10 14.500l2.500-3h-5zM2.500 8.500l3-2.500v5zM17.500 8.500l-3-2.500v5z" fill="#0b5f8f" />
            <path d="M3 3h3M3 3v2M17 3h-3M17 3v2M3 14h3M17 14h-3" stroke="#222" />
            <path d="M1 18.500h18" stroke="#eee" strokeWidth="1.500" />
          </svg>
        </button>
      </div>
    </footer>
  );
}

/* ---------- taskbar ---------- */

const TASKS: { name: string; open?: "run" | "active"; art: React.ReactNode }[] = [
  { name: "Touch keyboard", art: (<><rect x="0.500" y="5" width="19" height="12" rx="1" fill="#2ea8f0" stroke="#d8eefc" /><path d="M3 8h14M3 11h14" stroke="#fff" strokeWidth="1.300" strokeDasharray="1.500 1" /><path d="M6 14.300h8" stroke="#fff" strokeWidth="1.300" /></>) },
  { name: "File Explorer", open: "run", art: (<><path d="M0 1h8l2 3h10v15H0z" fill="#f0a810" /><path d="M0 6h20v13H0z" fill="#ffd84c" /><path d="M4 20v-8h12v8h-3v-4H7v4z" fill="#2a8fdc" /></>) },
  { name: "Mail", art: (<><path d="M0 8L10 0l10 8v2H0z" fill="#0b5fb0" /><path d="M2 7.500h16L10 13z" fill="#fff" /><path d="M0 8l10 6 10-6v12H0z" fill="#22b4f8" /><path d="M0 20l10-7 10 7z" fill="#0a90e4" opacity="0.600" /></>) },
  { name: "Media", art: (<><path d="M0 0h20v20H0z" fill="#8e8e92" /><circle cx="10" cy="10.500" r="8" fill="#4a1f86" /><path d="M8 1c-1 5 7 6 5 12-1 3-4 3-6 2 4 0 4-3 2-6-2-3-2-5-1-8z" fill="#fff" /></>) },
  { name: "Edge", art: (<><circle cx="10" cy="10" r="9.700" fill="#0a84dc" /><path d="M1 7C3-2 17-3 19.700 8c0.500 4-3 6-7 5-2-0.500-0.500-2-0.500-3.500C12 5 4 4 1 7z" fill="#30c4c8" /><path d="M12 0.700c7 1.300 9.500 7 7 10.800-2 2.500-5 2-6.500 1.300 2-3 2-8-0.500-12.100z" fill="#5fd85a" opacity="0.850" /><path d="M7.500 8c-2 5 2 9 9 8-5 5-13 3-12-3 0.300-3 1.500-4.500 3-5z" fill="#0b4fa0" /></>) },
  { name: "Word", open: "run", art: (<><path d="M5 0h15v20H5z" fill="#41a5ee" /><path d="M5 5h15v5H5z" fill="#2b7cd3" /><path d="M5 10h15v10H5z" fill="#185abd" /><path d="M0 4h12v12H0z" fill="#103f91" /><text x="6" y="13.500" textAnchor="middle" fontSize="10" fontWeight="700" fontFamily="Open Sans, sans-serif" fill="#fff">W</text></>) },
  { name: "Communication", open: "run", art: (<><path d="M3 3h8v16H3z" fill="#5a8a28" /><path d="M0 6h14M0 13h14" stroke="#f4d020" strokeWidth="2.500" /><circle cx="7" cy="3.500" r="3.200" fill="#e83820" /><circle cx="7" cy="10" r="3.800" fill="#f4e020" /><circle cx="7" cy="16.500" r="3.400" fill="#58c838" /><text x="15" y="7" fontSize="7" fontWeight="700" fontFamily="Open Sans, sans-serif" fill="#ddd">X</text><path d="M15 10.500h4" stroke="#ddd" /><text x="15" y="19" fontSize="7" fontWeight="700" fontFamily="Open Sans, sans-serif" fill="#ddd">Y</text></>) },
  { name: "DOPSoft", open: "active", art: (<><rect x="0.500" y="0.500" width="19" height="19" rx="4" fill="#fff" /><path d="M9.500 14.500H6q-2 0-2-2V7q0-2 2-2h8q2 0 2 2v3" fill="none" stroke="#19bdf2" strokeWidth="2" /><path d="M12 11l4 4.500" stroke="#222" strokeWidth="3" /></>) },
];

function Taskbar() {
  return (
    <nav className="flex h-[38px] shrink-0 items-center bg-[linear-gradient(90deg,#1b1f20_0%,#1a2a24_45%,#132218_60%,#0d1f20_78%,#0c2a2e_88%,#0e3035_100%)] text-sm text-white">
      <button aria-label="Start" className="w-[43px] pl-[11px]">
        <svg aria-hidden="true" width="20" height="21" viewBox="0 0 20 21" fill="#fff"><path d="M0 3l8.500-1.300V10H0zM9.500 1.500L20 0v10H9.500zM0 11h8.500v8.300L0 18zM9.500 11H20v10L9.500 19.500z" /></svg>
      </button>
      <button aria-label="Search" className="w-[43px] pl-[12px]">
        <svg aria-hidden="true" width="20" height="22" viewBox="0 0 20 22" fill="none" stroke="#eee" strokeWidth="1.600"><circle cx="12.500" cy="8" r="6.500" /><path d="M8 13L1 20.500" strokeWidth="2" /></svg>
      </button>
      <button aria-label="Task view" className="w-[43px] pl-[12px]">
        <svg aria-hidden="true" width="20" height="20" viewBox="0 0 20 20" fill="none" stroke="#eee" strokeWidth="1.600"><path d="M1 0.500v3.500h12V0.500M1 19.500V16h12v3.500M2 7h10v6H2zM17.500 0v4M17.500 9v11M15.500 6.500h4" /></svg>
      </button>
      <span className="ml-[7px] mr-[17px] h-4 w-1 border-x border-[#4a5250]" />
      {TASKS.map((t) => (
        <button
          key={t.name}
          aria-label={t.name}
          className={`flex h-full w-11 items-center justify-center ${t.open === "active" ? "bg-[#4a5452] shadow-[inset_0_-2px_0_#6cc0f0]" : ""}`}
        >
          <span className={`flex h-full w-8 items-center justify-center ${t.open === "run" ? "shadow-[inset_0_-2px_0_#6cc0f0]" : ""}`}>
            <svg aria-hidden="true" width="20" height="20" viewBox="0 0 20 20">{t.art}</svg>
          </span>
        </button>
      ))}
      <div className="ml-auto flex items-center">
        <span className="mr-[15px] h-4 w-1 border-x border-[#3b4442]" />
        <span className="mr-[50px] pb-px">EN</span>
        <button className="flex items-center gap-[10px] whitespace-nowrap text-base">
          <svg aria-hidden="true" width="29" height="20" viewBox="0 0 29 20" fill="none" stroke="#eee" strokeWidth="1.600">
            <path d="M25 3v13q0 2 1.500 2.500T28 16V3zM1 1h24v18H1zM28 17q-1 2-3 2" />
            <path d="M5 7h8v8H5zM5 4h16M16 7.500h6M16 11h6M16 14.500h6" />
          </svg>
          <span className="pt-[2px]">17°C&nbsp; Cloudy</span>
        </button>
        <button aria-label="Show hidden icons" className="ml-[13px]">
          <svg aria-hidden="true" width="15" height="10" viewBox="0 0 15 10" fill="none" stroke="#eee" strokeWidth="1.600"><path d="M1 9l6.500-7L14 9" /></svg>
        </button>
        <svg role="img" aria-label="Battery" width="20" height="16" viewBox="0 0 20 16" fill="none" stroke="#eee" strokeWidth="1.400" className="ml-3">
          <path d="M8 4h10v9H6V9M18 6.500h1.500v4H18M1 2v3q0 2.500 2.500 2.500T6 5V2zM2.500 2V0M4.500 2V0M3.500 7.500V11h2" /><path d="M8.500 6h5v5h-5z" fill="#eee" />
        </svg>
        <svg role="img" aria-label="No internet" width="21" height="22" viewBox="0 0 21 22" fill="none" stroke="#eee" strokeWidth="1.300" className="ml-[9px]">
          <circle cx="10" cy="11" r="9" /><ellipse cx="10" cy="11" rx="4" ry="9" /><path d="M1.500 8h17M1.500 14h10" />
          <circle cx="15.500" cy="16.500" r="4.300" fill="#0d2729" /><path d="M12.500 13.500l6 6" />
        </svg>
        <time className="ml-3">18:07</time>
        <button aria-label="Notifications" className="ml-5 mr-7">
          <svg aria-hidden="true" width="20" height="21" viewBox="0 0 20 21"><path d="M0 0h20v15.500h-6L10 20.500 8 15.500H0z" fill="#fff" /><path d="M4 4.500h12M4 8h12M4 11.500h8" stroke="#0e3035" strokeWidth="1.400" /></svg>
        </button>
      </div>
    </nav>
  );
}

export default function App() {
  return (
    <div className="relative flex h-screen min-h-[800px] flex-col overflow-hidden bg-[#555] font-['Open_Sans','Noto_Sans',sans-serif]">
      <TitleBar />
      <RibbonTabs />
      <button aria-label="Application menu" className="absolute left-[3px] top-[6px] z-10"><AppBadge /></button>
      <Ribbon />
      <main className="flex min-h-0 flex-1 border-t-4 border-[#444]">
        <aside className="flex w-[299px] shrink-0 flex-col">
          <ProjectPanel />
          <OutputPanel />
        </aside>
        <div className="w-[6px] shrink-0" />
        <Canvas />
        <div className="w-[5px] shrink-0" />
        <PropertiesPanel />
      </main>
      <StatusBar />
      <Taskbar />
    </div>
  );
}
